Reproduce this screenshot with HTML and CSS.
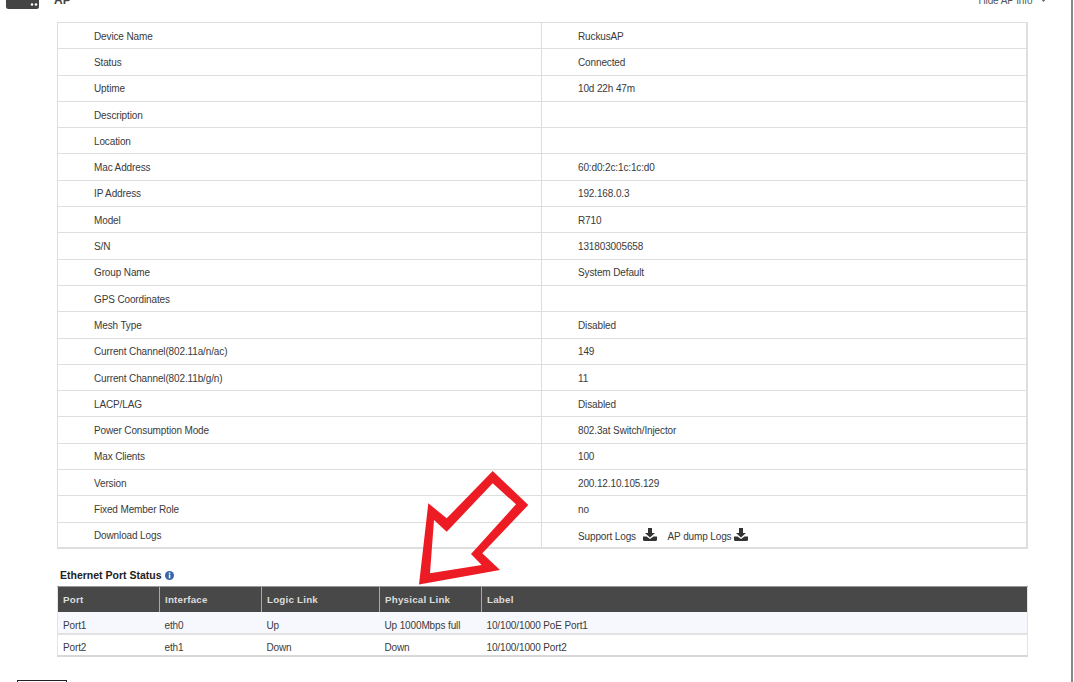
FILE: index.html
```html
<!DOCTYPE html>
<html lang="en">
<head>
<meta charset="utf-8">
<title>AP</title>
<link rel="stylesheet" href="styles.css">
</head>
<body>
<div class="page">
  <header class="ap-head">
    <div class="ap-title">
      <svg class="ap-icon" width="33" height="9" viewBox="0 0 33 9"><path d="M0 0H33V6.500Q33 9 30.500 9H2.500Q0 9 0 6.500Z" fill="#444"/><circle cx="26" cy="4.500" r="1.300" fill="#fff"/><circle cx="30" cy="4.500" r="1.300" fill="#fff"/></svg>
      <span class="ap-name">AP</span>
    </div>
    <div class="ap-toggle">Hide AP Info <svg width="7" height="5" viewBox="0 0 7 5"><path d="M0.500 0.500L3.500 4L6.500 0.500Z" fill="#666"/></svg></div>
  </header>

  <table class="info">
    <tr><td>Device Name</td><td>RuckusAP</td></tr>
    <tr><td>Status</td><td>Connected</td></tr>
    <tr><td>Uptime</td><td>10d 22h 47m</td></tr>
    <tr><td>Description</td><td></td></tr>
    <tr><td>Location</td><td></td></tr>
    <tr><td>Mac Address</td><td>60:d0:2c:1c:1c:d0</td></tr>
    <tr><td>IP Address</td><td>192.168.0.3</td></tr>
    <tr><td>Model</td><td>R710</td></tr>
    <tr><td>S/N</td><td>131803005658</td></tr>
    <tr><td>Group Name</td><td>System Default</td></tr>
    <tr><td>GPS Coordinates</td><td></td></tr>
    <tr><td>Mesh Type</td><td>Disabled</td></tr>
    <tr><td>Current Channel(802.11a/n/ac)</td><td>149</td></tr>
    <tr><td>Current Channel(802.11b/g/n)</td><td>11</td></tr>
    <tr><td>LACP/LAG</td><td>Disabled</td></tr>
    <tr><td>Power Consumption Mode</td><td>802.3at Switch/Injector</td></tr>
    <tr><td>Max Clients</td><td>100</td></tr>
    <tr><td>Version</td><td>200.12.10.105.129</td></tr>
    <tr><td>Fixed Member Role</td><td>no</td></tr>
    <tr><td>Download Logs</td><td><span class="logs"><span class="log first">Support Logs <svg width="14" height="13" viewBox="0 0 14 13"><path d="M5 0H9V5H12L7 9.500L2 5H5Z" fill="#333"/><path d="M0 8.500H3.500L7 11L10.500 8.500H14V11.500Q14 13 12.500 13H1.500Q0 13 0 11.500Z" fill="#333"/></svg></span><span class="log">AP dump Logs <svg width="14" height="13" viewBox="0 0 14 13"><path d="M5 0H9V5H12L7 9.500L2 5H5Z" fill="#333"/><path d="M0 8.500H3.500L7 11L10.500 8.500H14V11.500Q14 13 12.500 13H1.500Q0 13 0 11.500Z" fill="#333"/></svg></span></span></td></tr>
  </table>

  <h3 class="section">Ethernet Port Status <svg width="9" height="9" viewBox="0 0 9 9"><circle cx="4.500" cy="4.500" r="4.500" fill="#3a66a8"/><rect x="3.800" y="1.500" width="1.500" height="1.400" fill="#fff"/><rect x="3.800" y="3.500" width="1.500" height="3.800" fill="#fff"/></svg></h3>

  <table class="ports">
    <thead>
      <tr><th class="c1">Port</th><th class="c2">Interface</th><th class="c3">Logic Link</th><th class="c4">Physical Link</th><th>Label</th></tr>
    </thead>
    <tbody>
      <tr class="odd"><td>Port1</td><td>eth0</td><td>Up</td><td>Up 1000Mbps full</td><td>10/100/1000 PoE Port1</td></tr>
      <tr><td>Port2</td><td>eth1</td><td>Down</td><td>Down</td><td>10/100/1000 Port2</td></tr>
    </tbody>
  </table>

  <div class="stub"></div>
</div>
<div class="scroll-edge"></div>
<svg class="arrow" width="1074" height="682" viewBox="0 0 1074 682"><path d="M419 584.500L428.300 503.300L446.700 518.300L492.700 471L528.300 505L482.300 553.300L500 570ZM430 573.300L481.700 565L471 554L516 504.300L492.700 483.300L446.700 531.700L434 520Z" fill="#ed1c24" fill-rule="evenodd"/></svg>
</body>
</html>
```
FILE: styles.css
```css
* { box-sizing: border-box; }
html, body { margin: 0; height: 682px; overflow: hidden; background: #fff; }
body { font-family: "Liberation Sans", Arial, sans-serif; font-size: 10px; letter-spacing: -0.13px; color: #3a3a3a; position: relative; }
.page { width: 1071px; }
.ap-head { height: 29px; margin-top: -7px; padding: 0 24px 0 6px; display: flex; justify-content: space-between; }
.ap-title { display: flex; align-items: flex-start; gap: 15px; }
.ap-icon { margin-top: 7px; display: block; }
.ap-name { font-size: 12px; font-weight: bold; color: #444; line-height: 14px; letter-spacing: 0; }
.ap-toggle { font-size: 10px; color: #555; line-height: 14px; margin-top: 1px; letter-spacing: -0.13px; }
.ap-toggle svg { margin-left: 5px; vertical-align: 1px; }
.info, .ports { border-collapse: collapse; table-layout: fixed; margin-left: 57px; width: 971px; }
.info { border: 1px solid #dedede; border-right-width: 2px; border-bottom-width: 2px; }
.info tr { height: 26.300px; }
.info td { padding: 1px 0 0 36px; border-bottom: 1px solid #dedede; }
.info td:first-child { width: 484px; border-right: 1px solid #dedede; }
.logs { display: flex; gap: 11px; align-items: center; margin-top: -1px; }
.log svg { margin-left: 0; vertical-align: -1px; }
.log.first svg { margin-left: 4px; }
.section { margin: 20px 0 0 60px; height: 17px; font-size: 10.500px; line-height: 12px; color: #222; font-weight: bold; letter-spacing: 0; }
.section svg { margin-left: 1px; vertical-align: -1px; }
.ports { border-bottom: 2px solid #d8d8d8; border-left: 1px solid #e4e4e4; border-right: 1px solid #e4e4e4; }
.ports th { background: #484848; color: #ddd; text-align: left; height: 25px; padding: 0 0 0 5px; font-size: 9.800px; border-left: 1px solid #aaa; border-top: 1px solid #999; letter-spacing: .2px; }
.ports th:first-child { border-left: 0; padding-left: 5px; }
.c1 { width: 102px; }
.c2 { width: 102px; }
.c3 { width: 118px; }
.c4 { width: 102px; }
.ports td { padding: 5px 0 0 5px; height: 22px; }
.ports .odd td { background: #f7f8fe; border-bottom: 2px solid #e2e2e2; height: 22px; padding-top: 6px; }
.stub { margin: 23px 0 0 17px; width: 50px; height: 10px; border: 1px solid #222; }
.scroll-edge { position: absolute; top: 0; bottom: 0; left: 1071px; width: 2px; background: #888; }
.arrow { position: absolute; inset: 0; pointer-events: none; }
```
